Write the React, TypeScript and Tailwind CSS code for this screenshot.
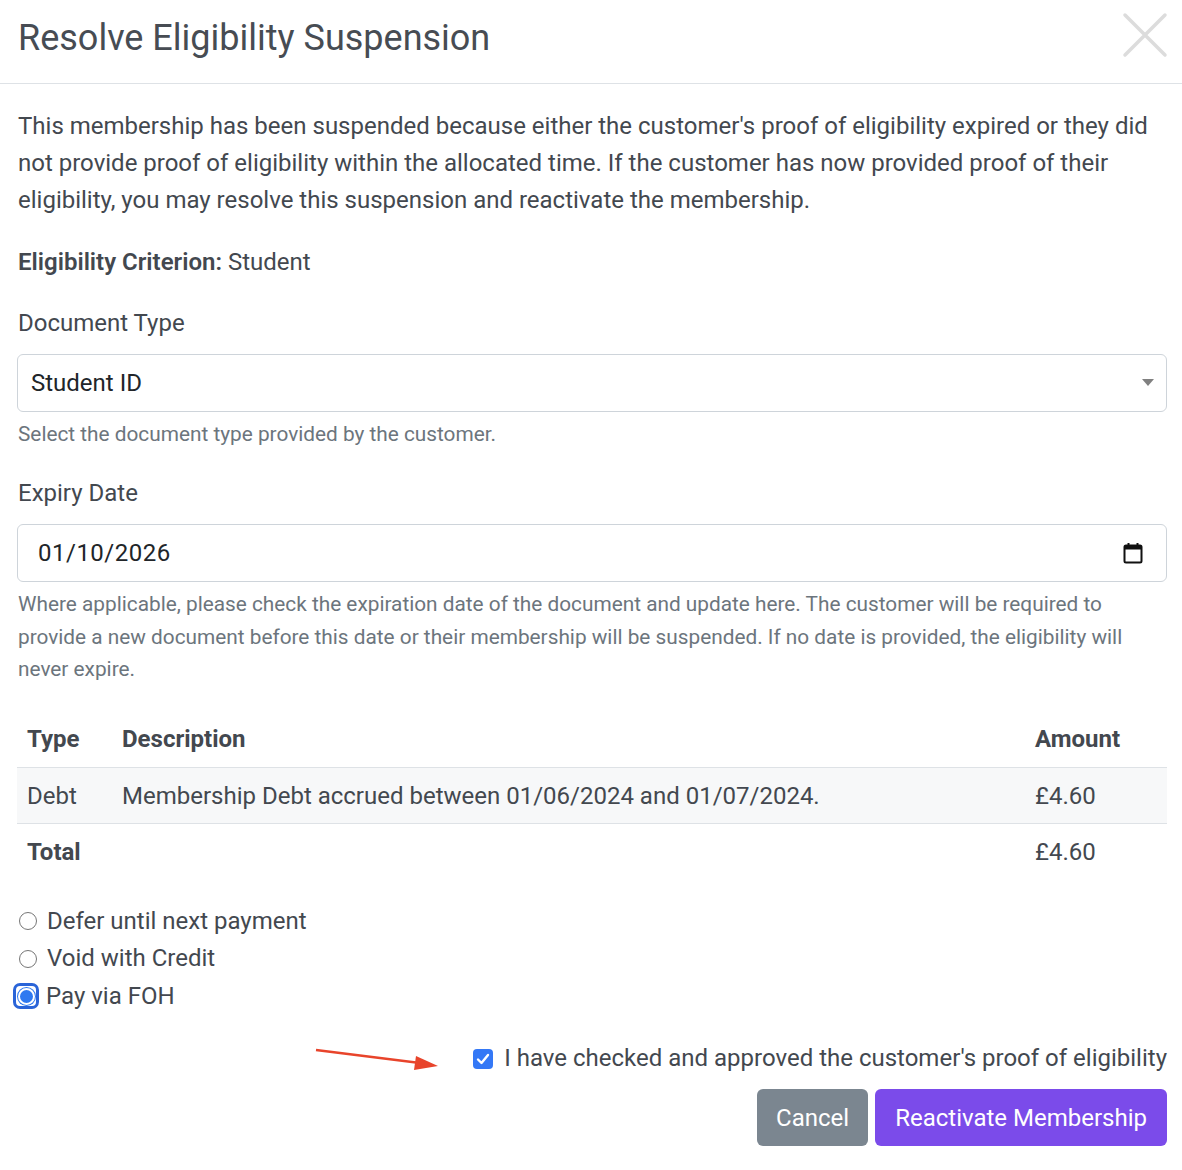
import React from "react";

const font = { fontFamily: "Roboto, 'Liberation Sans', sans-serif" };

function CloseIcon() {
  return (
    <svg width="46" height="46" viewBox="0 0 46 46" fill="none">
      <path d="M3 3 L43 43 M43 3 L3 43" stroke="#dcdcdc" strokeWidth="3.5" strokeLinecap="round" />
    </svg>
  );
}

function CalendarIcon() {
  return (
    <svg width="20" height="22" viewBox="0 0 20 22" fill="none">
      <rect x="1.5" y="3.5" width="17" height="17" rx="1.5" stroke="#111" strokeWidth="2" />
      <rect x="1.5" y="3.5" width="17" height="4" fill="#111" />
      <path d="M5.5 1 V5 M14.5 1 V5" stroke="#111" strokeWidth="2" />
    </svg>
  );
}

function Arrow() {
  return (
    <svg width="130" height="26" viewBox="0 0 130 26" className="-mr-[8px]">
      <path d="M2 4 L106 17" stroke="#e8442b" strokeWidth="2.5" />
      <path d="M124 20 L102 10 L100 24 Z" fill="#e8442b" />
    </svg>
  );
}

export default function App() {
  return (
    <div className="w-[1182px] bg-white text-[#43484f]" style={font}>
      <div className="h-[84px] border-b border-[#dee2e6] flex items-center justify-between pl-[18px] pr-[14px]">
        <h1 className="text-[36px] leading-none font-normal text-[#474c53] -mt-[8px]">
          Resolve Eligibility Suspension
        </h1>
        <div className="-mt-[14px]">
          <CloseIcon />
        </div>
      </div>

      <div className="pl-[17px] pr-[15px] pt-[24px] pb-[22px]">
        <p className="text-[24px] leading-[37px] pl-[1px]">
          This membership has been suspended because either the customer's proof of eligibility expired or they did
          not provide proof of eligibility within the allocated time. If the customer has now provided proof of their
          eligibility, you may resolve this suspension and reactivate the membership.
        </p>

        <p className="text-[24px] leading-[37px] mt-[25px] pl-[1px]">
          <span className="font-semibold">Eligibility Criterion:</span> Student
        </p>

        <div className="mt-[24px] text-[24px] leading-[37px] pl-[1px]">Document Type</div>
        <div className="mt-[12px] h-[58px] border border-[#ced4da] rounded-[6px] flex items-center justify-between pl-[13px] pr-[12px]">
          <span className="text-[24px] text-[#212529]">Student ID</span>
          <svg width="12" height="8" viewBox="0 0 12 8">
            <path d="M0 0 H12 L6 7 Z" fill="#808080" />
          </svg>
        </div>
        <div className="mt-[6px] text-[20.8px] leading-[32px] text-[#6c757d] pl-[1px]">
          Select the document type provided by the customer.
        </div>

        <div className="mt-[25px] text-[24px] leading-[37px] pl-[1px]">Expiry Date</div>
        <div className="mt-[12px] h-[58px] border border-[#ced4da] rounded-[6px] flex items-center justify-between pl-[20px] pr-[23px]">
          <span className="text-[24px] text-[#212529] tracking-[0.5px]">01/10/2026</span>
          <CalendarIcon />
        </div>
        <div className="mt-[6px] text-[20.8px] leading-[32.5px] text-[#6c757d] pl-[1px]">
          Where applicable, please check the expiration date of the document and update here. The customer will be required to
          provide a new document before this date or their membership will be suspended. If no date is provided, the eligibility will
          never expire.
        </div>

        <table className="w-full mt-[26px] text-[24px] border-collapse">
          <thead>
            <tr className="h-[56px]">
              <th className="text-left font-bold pl-[10px] w-[105px]">Type</th>
              <th className="text-left font-bold">Description</th>
              <th className="text-left font-bold w-[132px]">Amount</th>
            </tr>
          </thead>
          <tbody>
            <tr className="h-[56px] bg-[#f7f8f9] border-t border-[#dee2e6]">
              <td className="pl-[10px]">Debt</td>
              <td>Membership Debt accrued between 01/06/2024 and 01/07/2024.</td>
              <td>£4.60</td>
            </tr>
            <tr className="h-[56px] border-t border-[#dee2e6]">
              <td className="pl-[10px] font-bold">Total</td>
              <td></td>
              <td>£4.60</td>
            </tr>
          </tbody>
        </table>

        <div className="mt-[23px] flex flex-col text-[24px] leading-[37.5px]">
          <label className="flex items-center gap-[10px] pl-[1px]">
            <span className="w-[18px] h-[18px] ml-[1px] rounded-full border border-[#767676] bg-white" />
            Defer until next payment
          </label>
          <label className="flex items-center gap-[10px] pl-[1px]">
            <span className="w-[18px] h-[18px] ml-[1px] rounded-full border border-[#767676] bg-white" />
            Void with Credit
          </label>
          <label className="flex items-center gap-[7px]">
            <span className="w-[26px] h-[26px] -ml-[4px] rounded-[7px] border-[3px] border-[#2a64d8] flex items-center justify-center">
              <span className="w-[17px] h-[17px] rounded-full bg-[#2f79f0] border-[2.5px] border-white ring-1 ring-[#2f79f0] inline-block" />
            </span>
            Pay via FOH
          </label>
        </div>

        <div className="mt-[25px] flex items-center justify-end gap-[11px] text-[24px] leading-[37px]">
          <Arrow />
          <span className="w-[20px] h-[20px] rounded-[4px] bg-[#3478f6] flex items-center justify-center ml-[26px]">
            <svg width="14" height="12" viewBox="0 0 14 12">
              <path d="M2 6.5 L5.5 10 L12 2" stroke="white" strokeWidth="2.4" fill="none" strokeLinecap="round" strokeLinejoin="round" />
            </svg>
          </span>
          <span>I have checked and approved the customer's proof of eligibility</span>
        </div>

        <div className="mt-[12px] flex justify-end gap-[7px]">
          <button className="h-[57px] px-[19px] rounded-[6px] bg-[#7b8690] text-white text-[24px]">Cancel</button>
          <button className="h-[57px] px-[20px] rounded-[6px] bg-[#7b4bea] text-white text-[24px]">Reactivate Membership</button>
        </div>
      </div>
    </div>
  );
}
